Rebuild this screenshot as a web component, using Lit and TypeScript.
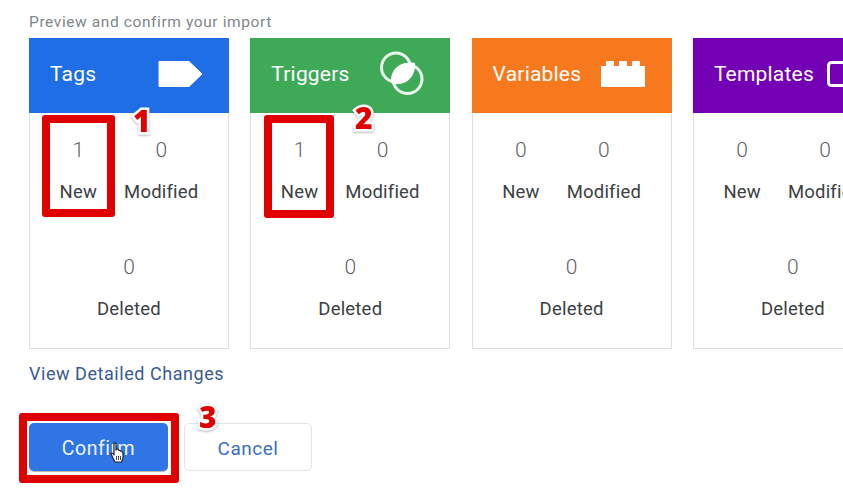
import { html, css, LitElement, svg } from 'lit';
import { customElement } from 'lit/decorators.js';

const icons: Record<string, unknown> = {
  tag: svg`<path d="M1 10.5 H31 L44 23 L31 35.5 H1 Z" fill="#fff" stroke="#fff" stroke-width="1" stroke-linejoin="round" />`,
  trigger: svg`
    <circle cx="17" cy="16.5" r="14.5" fill="none" stroke="#e9f6ec" stroke-width="3" />
    <circle cx="28.5" cy="28" r="14.5" fill="none" stroke="#e9f6ec" stroke-width="3" />
    <path d="M36 12 C37 22 31 35 13 33 C9 22 20 9 36 12 Z" fill="#fff" />`,
  lego: svg`
    <path d="M0 15 H5 V11 Q5 10 6 10 H12 Q13 10 13 11 V15 H18 V11 Q18 10 19 10 H25 Q26 10 26 11 V15 H31 V11 Q31 10 32 10 H38 Q39 10 39 11 V15 H44 V36 H0 Z" fill="#fff" />`,
  template: svg`<rect x="6.5" y="11.5" width="38" height="23" rx="3" fill="none" stroke="#fff" stroke-width="3" />`,
};

const sections = [
  { name: 'Tags', cls: 'tags', icon: 'tag', added: 1 },
  { name: 'Triggers', cls: 'triggers', icon: 'trigger', added: 1 },
  { name: 'Variables', cls: 'variables', icon: 'lego', added: 0 },
  { name: 'Templates', cls: 'templates', icon: 'template', added: 0 },
];

@customElement('app-root')
export class AppRoot extends LitElement {
  static styles = css`
    :host {
      display: block;
      position: relative;
      width: 843px;
      height: 497px;
      overflow: hidden;
      background: #fff;
      font-family: Roboto, 'Liberation Sans', sans-serif;
    }

    .page {
      display: flex;
      flex-direction: column;
      align-items: flex-start;
      padding: 13px 0 0 29px;
    }

    .heading {
      height: 18px;
      line-height: 18px;
      margin-bottom: 7px;
      font-size: 15.5px;
      letter-spacing: 0.6px;
      color: #80868b;
    }

    .cards {
      display: flex;
      gap: 21.3px;
    }

    .card {
      flex: none;
      box-sizing: border-box;
      width: 200px;
      height: 311px;
      border: 1px solid #dfdfe1;
      border-top: none;
    }

    .card-head {
      display: flex;
      align-items: center;
      justify-content: space-between;
      box-sizing: border-box;
      height: 75px;
      margin: 0 -1px;
      padding: 0 26px 3px 21px;
      color: #fff;
      font-size: 21px;
      letter-spacing: 0.2px;
    }

    .tags { background: #1f6ee6; }
    .triggers { background: #3eaa58; }
    .variables { background: #f7791e; }
    .templates { background: #7300b5; }

    .card-head svg {
      flex: none;
      display: block;
      width: 45px;
      height: 46px;
    }

    .row {
      display: flex;
      justify-content: center;
      gap: 27px;
      margin-top: 26px;
    }

    .row + .row {
      margin-top: 53px;
    }

    .stat {
      display: flex;
      flex-direction: column;
      align-items: center;
      gap: 20px;
    }

    .num {
      line-height: 22px;
      font-size: 21px;
      font-weight: 300;
      color: #5f6368;
    }

    .label {
      line-height: 22px;
      font-size: 18.5px;
      letter-spacing: 0.2px;
      color: #3c4043;
    }

    .link {
      margin-top: 15px;
      line-height: 20px;
      font-size: 18px;
      letter-spacing: 0.55px;
      color: #3b5a92;
    }

    .actions {
      display: flex;
      gap: 16px;
      margin-top: 39px;
    }

    .btn {
      box-sizing: border-box;
      height: 48px;
      padding: 2px 0 0;
      border-radius: 5px;
      font: 400 19.5px Roboto, 'Liberation Sans', sans-serif;
      letter-spacing: 0.5px;
    }

    .confirm {
      width: 139px;
      border: none;
      background: #2f75e6;
      box-shadow: 0 1px 1px rgba(0, 0, 0, 0.3);
      color: #eef4fd;
    }

    .cancel {
      width: 128px;
      border: 1.5px solid #e3e3e3;
      background: #fff;
      font-size: 19px;
      color: #3b70bf;
    }

    .box {
      position: absolute;
      box-sizing: border-box;
      border: 8px solid #e00000;
      border-radius: 3px;
    }

    .box-1 { left: 42px; top: 115px; width: 73px; height: 102px; }
    .box-2 { left: 264px; top: 115px; width: 70px; height: 103px; }
    .box-3 { left: 19px; top: 413px; width: 160px; height: 70px; }

    .mark {
      position: absolute;
      font: 800 30px/30px 'Open Sans', sans-serif;
      color: #e00000;
      -webkit-text-stroke: 5px #fff;
      paint-order: stroke fill;
      filter: drop-shadow(0 1px 1px rgba(0, 0, 0, 0.3));
    }

    .mark-1 { left: 133px; top: 106px; }
    .mark-2 { left: 355px; top: 103px; }
    .mark-3 { left: 199px; top: 402px; }

    .cursor {
      position: absolute;
      left: 110px;
      top: 442px;
      width: 15px;
      height: 21px;
    }
  `;

  renderCard(s: (typeof sections)[number]) {
    return html`
      <div class="card">
        <div class="card-head ${s.cls}">
          <span>${s.name}</span>
          <svg viewBox="0 0 45 46">${icons[s.icon]}</svg>
        </div>
        <div class="row">
          <div class="stat"><span class="num">${s.added}</span><span class="label">New</span></div>
          <div class="stat"><span class="num">0</span><span class="label">Modified</span></div>
        </div>
        <div class="row">
          <div class="stat"><span class="num">0</span><span class="label">Deleted</span></div>
        </div>
      </div>
    `;
  }

  render() {
    return html`
      <div class="page">
        <div class="heading">Preview and confirm your import</div>
        <div class="cards">${sections.map((s) => this.renderCard(s))}</div>
        <div class="link">View Detailed Changes</div>
        <div class="actions">
          <button class="btn confirm">Confirm</button>
          <button class="btn cancel">Cancel</button>
        </div>
      </div>
      <div class="box box-1"></div>
      <div class="box box-2"></div>
      <div class="box box-3"></div>
      <span class="mark mark-1">1</span>
      <span class="mark mark-2">2</span>
      <span class="mark mark-3">3</span>
      <svg class="cursor" viewBox="0 0 15 21">
        <path d="M4 1 Q5.5 0 6 2 V8 L7 7 Q8.5 7 9 8.5 Q10.5 8 11 9.5 Q12.5 9.5 13 11 V16 L11.5 20 H5 L1 12 Q1 10.5 3 11.5 L4 13 Z" fill="#fff" stroke="#222" stroke-width="1.2" stroke-linejoin="round" />
        <path d="M6.5 14 V18 M8.5 14 V18 M10.5 14 V18" stroke="#444" stroke-width="1" />
      </svg>
    `;
  }
}
